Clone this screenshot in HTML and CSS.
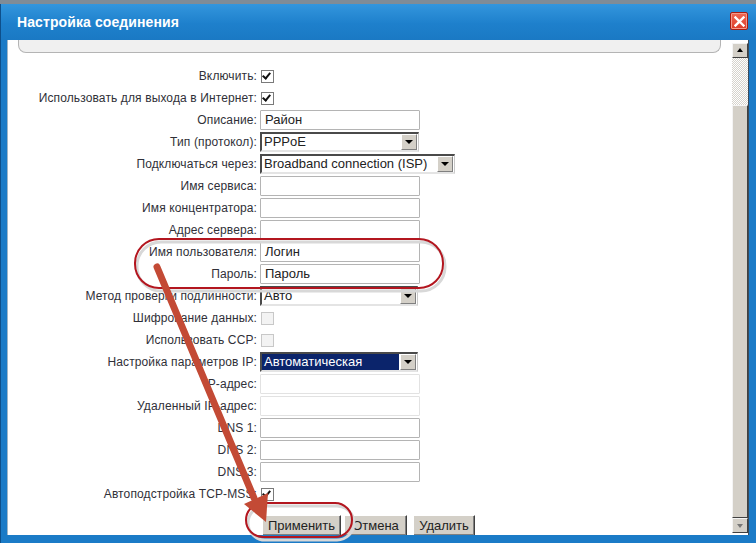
FILE: index.html
```html
<!DOCTYPE html>
<html lang="ru">
<head>
    <meta charset="UTF-8">
    <title>Настройка соединения</title>
    <link rel="stylesheet" href="styles.css">
</head>
<body>
    <div class="backdrop"></div>
    <div class="window">
        <div class="titlebar">
            <span class="title">Настройка соединения</span>
            <button class="close-btn" aria-label="Закрыть">
                <svg width="11" height="11" viewBox="0 0 11 11"><path d="M1.5 1.5 L9.5 9.5 M9.5 1.5 L1.5 9.5" stroke="#fff" stroke-width="2.4" stroke-linecap="square"/></svg>
            </button>
        </div>
        <div class="frame-body">
            <div class="content">
                <div class="top-panel"></div>

                <div class="form">
                    <label>Включить:</label>
                    <span class="check checked"></span>

                    <label>Использовать для выхода в Интернет:</label>
                    <span class="check checked"></span>

                    <label>Описание:</label>
                    <span class="input">Район</span>

                    <label>Тип (протокол):</label>
                    <span class="select w159"><span class="value">PPPoE</span><span class="arrow"></span></span>

                    <label>Подключаться через:</label>
                    <span class="select w195"><span class="value">Broadband connection (ISP)</span><span class="arrow"></span></span>

                    <label>Имя сервиса:</label>
                    <span class="input"></span>

                    <label>Имя концентратора:</label>
                    <span class="input"></span>

                    <label>Адрес сервера:</label>
                    <span class="input"></span>

                    <label>Имя пользователя:</label>
                    <span class="input">Логин</span>

                    <label>Пароль:</label>
                    <span class="input">Пароль</span>

                    <label>Метод проверки подлинности:</label>
                    <span class="select w158"><span class="value">Авто</span><span class="arrow"></span></span>

                    <label>Шифрование данных:</label>
                    <span class="check disabled"></span>

                    <label>Использовать CCP:</label>
                    <span class="check disabled"></span>

                    <label>Настройка параметров IP:</label>
                    <span class="select w158 focused"><span class="value">Автоматическая</span><span class="arrow"></span></span>

                    <label>IP-адрес:</label>
                    <span class="input disabled"></span>

                    <label>Удаленный IP-адрес:</label>
                    <span class="input disabled"></span>

                    <label>DNS 1:</label>
                    <span class="input"></span>

                    <label>DNS 2:</label>
                    <span class="input"></span>

                    <label>DNS 3:</label>
                    <span class="input"></span>

                    <label>Автоподстройка TCP-MSS:</label>
                    <span class="check checked"></span>
                </div>

                <div class="buttons">
                    <button class="btn apply">Применить</button>
                    <button class="btn cancel">Отмена</button>
                    <button class="btn remove">Удалить</button>
                </div>
            </div>
            <div class="scrollbar">
                <span class="sb-btn up"></span>
                <span class="sb-track"></span>
                <span class="sb-thumb"></span>
                <span class="sb-btn down"></span>
            </div>
        </div>
    </div>

    <!-- annotation drawn over the screenshot -->
    <svg class="annotation" width="756" height="543" viewBox="0 0 756 543">
        <rect x="137" y="242" width="308" height="49" rx="24" fill="none" stroke="#d8d8d8" stroke-width="3"/>
        <rect x="135" y="239" width="308" height="49" rx="24" fill="none" stroke="#b3161f" stroke-width="2"/>
        <rect x="248" y="506" width="106" height="34" rx="17" fill="none" stroke="#d8d8d8" stroke-width="3"/>
        <rect x="246" y="503" width="106" height="34" rx="17" fill="none" stroke="#b3161f" stroke-width="2"/>
        <line x1="157" y1="267" x2="254" y2="498" stroke="#c34a35" stroke-width="7" stroke-linecap="round"/>
        <polygon points="266,522 268,493 244,504" fill="#c34a35"/>
    </svg>
</body>
</html>
```

FILE: styles.css
```css
body {
    margin: 0;
    width: 756px;
    height: 543px;
    overflow: hidden;
    background: #1f2f45;
    font-family: "Liberation Sans", Arial, sans-serif;
    font-size: 13px;
    color: #333;
    position: relative;
}

.backdrop {
    height: 4px;
    background: #7f8c97;
}

/* Window frame */
.window {
    width: 756px;
    height: 539px;
    background: #1b7bc7;
    border-left: 1px solid #0e4f8a;
    box-sizing: border-box;
}

.titlebar {
    height: 36px;
    display: flex;
    align-items: center;
    justify-content: space-between;
    padding: 0 8px 0 16px;
    background: linear-gradient(#3396dd, #1e80cc 55%, #1a79c4);
}

.title {
    color: #fff;
    font-weight: bold;
    font-size: 14px;
    letter-spacing: 0.1px;
}

.close-btn {
    width: 18px;
    height: 18px;
    padding: 0;
    margin-top: -2px;
    border: 1px solid #a81d12;
    border-radius: 2px;
    background: linear-gradient(#f06a55, #de3b27);
    box-shadow: inset 0 0 0 1px #f59a8a;
    display: flex;
    align-items: center;
    justify-content: center;
}

.frame-body {
    display: flex;
    height: 495px;
    margin: 0 7px 0 6px;
}

.content {
    flex: 1;
    background: #fff;
    border-left: 1px solid #9fb6c8;
    overflow: hidden;
}

.top-panel {
    height: 12px;
    margin: 0 11px 0 10px;
    background: #f0f0f0;
    border: 1px solid #b4b4b4;
    border-top: none;
    border-radius: 0 0 8px 8px;
}

/* Form grid */
.form {
    display: grid;
    grid-template-columns: 249px 1fr;
    grid-auto-rows: 22px;
    column-gap: 3px;
    align-items: center;
    margin-top: 12px;
}

.form label {
    text-align: right;
    white-space: nowrap;
    font-size: 12px;
    letter-spacing: 0.12px;
    color: #303038;
}

.check {
    width: 11px;
    height: 11px;
    margin-left: 1px;
    border: 1px solid #7a7a7a;
    background: #fff;
    position: relative;
}

.check.checked::after {
    content: "";
    position: absolute;
    left: 2px;
    top: 0px;
    width: 3px;
    height: 6px;
    border: solid #111;
    border-width: 0 2px 2px 0;
    transform: rotate(40deg);
}

.check.disabled {
    border-color: #c8c8c8;
    background: #f3f3f3;
}

.input {
    width: 154px;
    height: 18px;
    line-height: 18px;
    padding-left: 4px;
    border: 1px solid #b4b4b4;
    border-radius: 1px;
    color: #222;
}

.input.disabled {
    border-color: #e2e2e2;
}

.select {
    height: 16px;
    display: flex;
    align-items: center;
    border-top: 2px solid #4a4a4a;
    border-left: 2px solid #4a4a4a;
    border-bottom: 2px solid #e4e4e4;
    border-right: 1px solid #c8c8c8;
    color: #222;
}

.select .value {
    flex: 1;
    height: 16px;
    line-height: 16px;
    padding-left: 2px;
    margin-right: 1px;
}

.select.focused .value {
    background: #0b246b;
    color: #fff;
}

.select .arrow {
    width: 14px;
    height: 14px;
    margin-right: 1px;
    background: #d4d0c8;
    border: 1px solid;
    border-color: #fff #808080 #808080 #fff;
    position: relative;
}

.select .arrow::after {
    content: "";
    position: absolute;
    left: 3px;
    top: 5px;
    border-left: 4px solid transparent;
    border-right: 4px solid transparent;
    border-top: 4px solid #000;
}

.w159 { width: 156px; }
.w195 { width: 192px; }
.w158 { width: 155px; }

/* Buttons */
.buttons {
    display: flex;
    gap: 3px;
    padding-left: 254px;
    margin-top: 10px;
}

.btn {
    height: 21px;
    padding: 0;
    font-family: "Liberation Sans", Arial, sans-serif;
    font-size: 13px;
    color: #222;
    background: #d4d0c8;
    border: 1px solid;
    border-color: #fff #404040 #404040 #fff;
    box-shadow: inset -1px -1px 0 #808080;
}

.apply { width: 79px; }
.cancel { width: 63px; }
.remove { width: 62px; margin-left: 3px; }

/* Scrollbar */
.scrollbar {
    width: 16px;
    display: flex;
    flex-direction: column;
    background: #fff;
    border-right: 1px solid #3a4a5a;
}

.sb-btn {
    height: 15px;
    background: #d4d0c8;
    border: 1px solid;
    border-color: #f4f4f4 #404040 #404040 #f4f4f4;
    box-sizing: border-box;
    position: relative;
}

.sb-btn.up {
    margin-top: 3px;
}

.sb-btn::after {
    content: "";
    position: absolute;
    left: 4px;
    border-left: 3px solid transparent;
    border-right: 3px solid transparent;
}

.sb-btn.up::after {
    top: 4px;
    border-bottom: 4px solid #000;
}

.sb-btn.down::after {
    top: 5px;
    border-top: 4px solid #777;
}

.sb-track {
    height: 47px;
    background-color: #f4f2ee;
    background-image: repeating-conic-gradient(#d6d3cc 0 25%, #fff 0 50%);
    background-size: 2px 2px;
}

.sb-thumb {
    flex: 1;
    background: #d4d0c8;
    border: 1px solid;
    border-color: #f4f4f4 #404040 #404040 #f4f4f4;
}

.sb-btn.down {
    margin-bottom: 2px;
}

/* Annotation overlay */
.annotation {
    position: absolute;
    top: 0;
    left: 0;
    pointer-events: none;
}
```
